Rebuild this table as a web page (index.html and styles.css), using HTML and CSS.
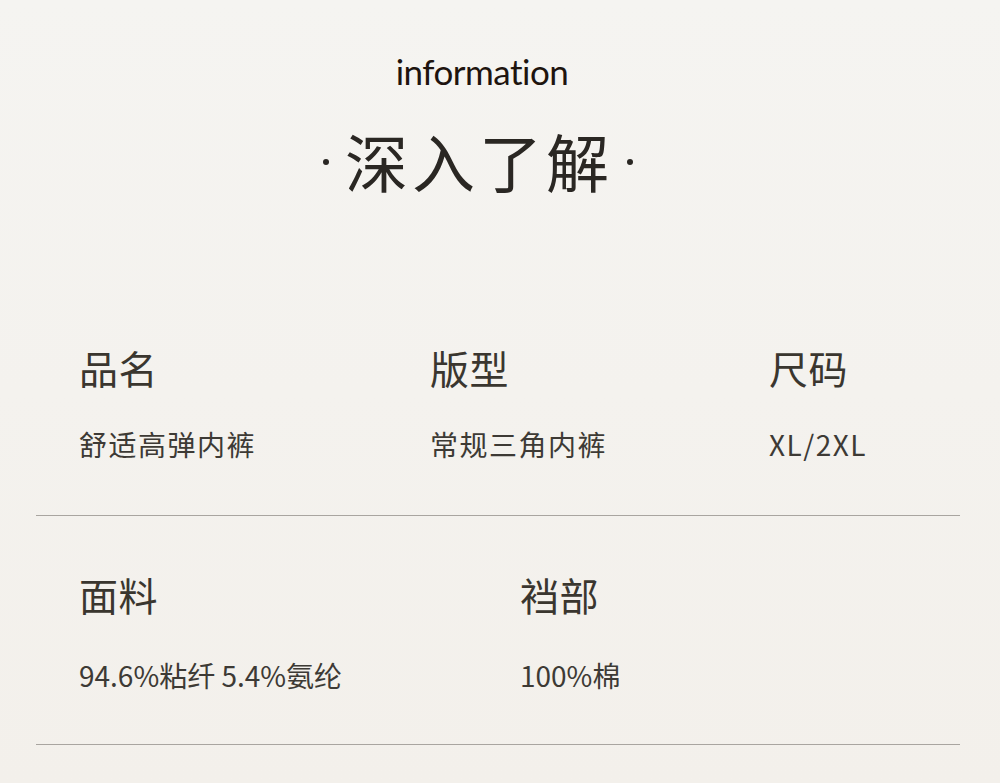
FILE: index.html
```html
<!DOCTYPE html>
<html lang="zh">
<head>
<meta charset="utf-8">
<link rel="stylesheet" href="styles.css">
</head>
<body>
<main class="page">
  <header class="head">
    <div class="en">information</div>
    <h1 class="title"><span class="dot"></span>深入了解<span class="dot"></span></h1>
  </header>
  <section class="row row-a">
    <div class="cell"><div class="label">品名</div><div class="value">舒适高弹内裤</div></div>
    <div class="cell"><div class="label">版型</div><div class="value">常规三角内裤</div></div>
    <div class="cell"><div class="label">尺码</div><div class="value num wide">XL/2XL</div></div>
  </section>
  <section class="row row-b">
    <div class="cell"><div class="label">面料</div><div class="value num">94.6%粘纤 5.4%氨纶</div></div>
    <div class="cell"><div class="label">裆部</div><div class="value num">100%棉</div></div>
  </section>
</main>
</body>
</html>
```
FILE: styles.css
```css
html, body {
  margin: 0;
  padding: 0;
}
body {
  width: 1000px;
  height: 783px;
  overflow: hidden;
  background: linear-gradient(#f5f4f1, #f3f0eb);
  font-family: "Noto Sans CJK SC", "Noto Sans", sans-serif;
  color: #3b3731;
}
.page {
  padding: 55px 40px 0 36px;
}
.head {
  display: flex;
  flex-direction: column;
  align-items: center;
}
.en {
  font-family: "Lato", sans-serif;
  font-weight: 400;
  font-size: 35px;
  line-height: 32px;
  color: #1e140f;
  margin-left: -32px;
  letter-spacing: -0.5px;
}
.title {
  margin: 42px 0 0;
  font-weight: 400;
  font-size: 63px;
  line-height: 62px;
  letter-spacing: 4px;
  color: #2a2723;
  margin-left: -40px;
  display: flex;
  align-items: center;
}
.dot {
  display: block;
  width: 6px;
  height: 6px;
  border-radius: 50%;
  background: #2a2723;
}
.dot:first-child {
  margin: 4px 16px 0 0;
}
.dot:last-child {
  margin: 4px 0 0 14px;
}
.row {
  display: grid;
  padding-left: 43px;
  border-bottom: 1px solid #a9a5a0;
}
.row-a {
  margin-top: 157px;
  grid-template-columns: 351px 339px 1fr;
  padding-bottom: 57px;
}
.row-b {
  grid-template-columns: 441px 1fr;
  padding-top: 59px;
  padding-bottom: 55px;
}
.label {
  font-size: 39px;
  line-height: 38px;
  letter-spacing: 0.5px;
  color: #3a362f;
}
.value {
  font-size: 28px;
  line-height: 28px;
  letter-spacing: 1.5px;
  color: #3d3a35;
  margin-top: 44px;
}
.row-b .value {
  margin-top: 48px;
}
.num {
  letter-spacing: 0;
}
.wide {
  letter-spacing: 1.5px;
}
```
